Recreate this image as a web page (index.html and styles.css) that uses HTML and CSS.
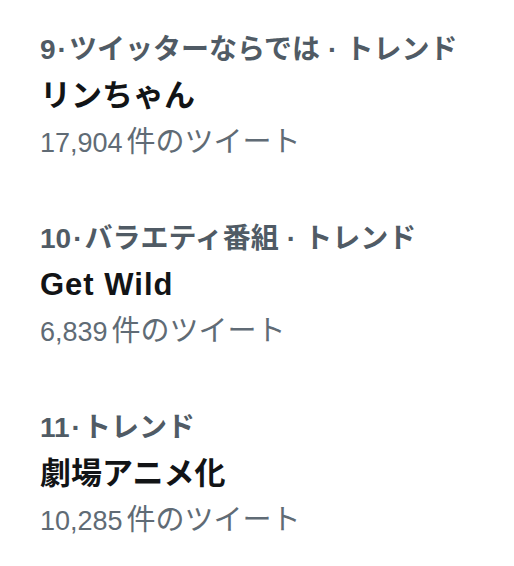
FILE: index.html
```html
<!DOCTYPE html>
<html lang="ja">
<head>
    <meta charset="UTF-8">
    <meta name="viewport" content="width=device-width, initial-scale=1.0">
    <title>トレンド</title>
    <link rel="stylesheet" href="styles.css">
</head>
<body>

    <div class="trends">
        <!-- Trend 9 -->
        <div class="trend">
            <div class="trend-meta">9<span class="dot">·</span>ツイッターならでは<span class="dot wide">·</span>トレンド</div>
            <div class="trend-name">リンちゃん</div>
            <div class="trend-count">17,904<span class="unit">件のツイート</span></div>
        </div>

        <!-- Trend 10 -->
        <div class="trend">
            <div class="trend-meta">10<span class="dot">·</span>バラエティ番組<span class="dot wide">·</span>トレンド</div>
            <div class="trend-name latin">Get Wild</div>
            <div class="trend-count">6,839<span class="unit">件のツイート</span></div>
        </div>

        <!-- Trend 11 -->
        <div class="trend">
            <div class="trend-meta">11<span class="dot">·</span>トレンド</div>
            <div class="trend-name">劇場アニメ化</div>
            <div class="trend-count">10,285<span class="unit">件のツイート</span></div>
        </div>
    </div>

</body>
</html>
```

FILE: styles.css
```css
/* Basic Page Styling */
body {
    font-family: "Liberation Sans", "Noto Sans CJK JP", sans-serif;
    margin: 0;
    padding: 0;
    background-color: #ffffff;
}
.trends {
    padding: 27px 0 0 40px;
}
.trend {
    padding-bottom: 50px;
}
/* Trend Lines */
.trend-meta {
    font-size: 28px;
    line-height: 46px;
    font-weight: 600;
    color: #505b65;
}
.dot {
    margin: 0 2px;
}
.dot.wide {
    margin: 0 8px;
}
.trend-name {
    font-size: 31px;
    line-height: 46px;
    font-weight: 700;
    color: #121416;
}
.trend-name.latin {
    letter-spacing: 1px;
}
.trend-count {
    font-size: 27px;
    line-height: 46px;
    color: #606b75;
}
.unit {
    margin-left: 4px;
    font-size: 29px;
}
```
